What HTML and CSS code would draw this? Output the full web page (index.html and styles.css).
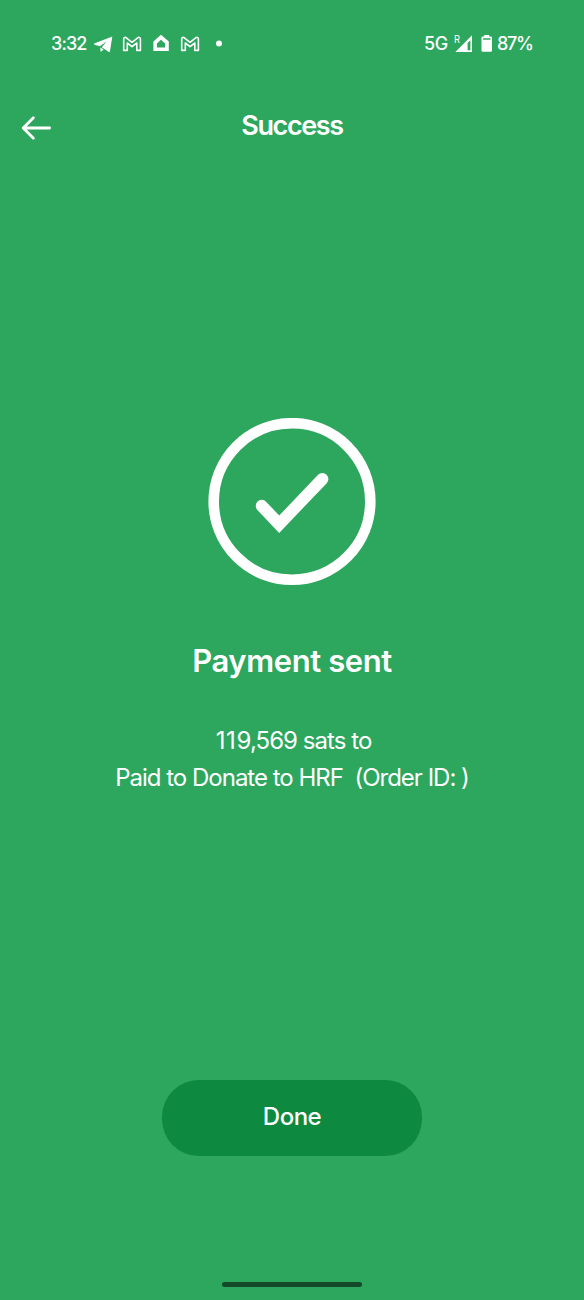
FILE: index.html
```html
<!DOCTYPE html>
<html lang="en">
<head>
<meta charset="utf-8">
<title>Success</title>
<link rel="stylesheet" href="styles.css">
</head>
<body>
<div class="screen">
  <div class="status">
    <span class="time">3:32</span>
    <svg class="notifications" width="136" height="24" viewBox="90 32 136 24" fill="none">
      <path d="M94.2 43.6 112.3 36.4 110 51.2Q109.7 52.4 108.5 51.7L101.8 47.2 106.6 41.6 99.8 46.2 94.5 44.8Q93.4 44.2 94.2 43.6ZM100.4 47.4 103.6 49.6 101.4 51.6Q100.4 51.8 100.4 50.6Z" fill="#fff"/>
      <g id="mail" stroke="#fff" stroke-width="1.6" stroke-linejoin="round">
        <path d="M123.7 50.4V39.2Q123.8 36.8 126 37.6L132 42.3 138 37.6Q140.3 36.8 140.4 39.2V50.4H136.8V43L132 46.7 127.3 43V50.4Z"/>
      </g>
      <path d="M161 34.8 168.8 41.5V51H153.4V41.5ZM161 39.8 156.9 43.4V47.4H165.1V43.4Z" fill="#fff" fill-rule="evenodd"/>
      <use href="#mail" x="58"/>
      <circle cx="219" cy="43.5" r="3" fill="#fff"/>
    </svg>
    <span class="network">5G</span>
    <svg class="signal" width="20" height="24" viewBox="453 32 20 24">
      <text class="roaming" x="454" y="43" textLength="6" lengthAdjust="spacingAndGlyphs">R</text>
      <path d="M472 35.3V52H455.3ZM470.4 40.2 467.6 43V50.3H470.4Z" fill="#fff" fill-rule="evenodd"/>
    </svg>
    <svg class="battery" width="12" height="24" viewBox="481 32 12 24">
      <path fill="#fff" fill-rule="evenodd" d="M484.2 35H489.2V36.6H490.8Q492 36.6 492 37.8V50.6Q492 51.8 490.8 51.8H482.7Q481.5 51.8 481.5 50.6V37.8Q481.5 36.6 482.7 36.6H484.2ZM483.1 38.2V39.8H490.4V38.2Z"/>
    </svg>
    <span class="percent">87%</span>
  </div>
  <header class="header">
    <svg class="back" width="32" height="28" viewBox="20 114 32 28" fill="none" stroke="#fff" stroke-width="2.8" stroke-linecap="round" stroke-linejoin="round">
      <path d="M49.6 128H23.2M33.4 117.8 23.2 128 33.4 138.2"/>
    </svg>
    <h1 class="title">Success</h1>
  </header>
  <main class="result">
    <svg width="168" height="168" viewBox="208 418 168 168" fill="none" stroke="#fff">
      <circle cx="292" cy="501.5" r="78.3" stroke-width="10.6"/>
      <path d="M261.7 505.8 279.2 524.2 322.4 479" stroke-width="12" stroke-linecap="round"/>
    </svg>
    <h2 class="heading">Payment sent</h2>
    <p class="details"><span class="amount"><span class="ones">11</span>9,569 sats to</span><br><span class="memo">Paid to Donate to HRF&nbsp; (Order ID: )</span></p>
  </main>
  <button class="done">Done</button>
  <div class="home"></div>
</div>
</body>
</html>
```
FILE: styles.css
```css
* { box-sizing: border-box; }
body { margin: 0; }
.screen {
  width: 584px;
  height: 1300px;
  background: #2ca75d;
  color: #fff;
  font-family: Inter, "Liberation Sans", sans-serif;
  display: flex;
  flex-direction: column;
  align-items: center;
}
.status {
  width: 100%;
  height: 88px;
  padding: 0 51px;
  display: flex;
  align-items: center;
  font-size: 18px;
  font-weight: 500;
  line-height: 24px;
}
.time { width: 39px; letter-spacing: -0.9px; }
.network { margin-left: auto; width: 29px; letter-spacing: -0.3px; }
.roaming { font-size: 11px; font-weight: 400; fill: #fff; }
.battery { margin: 0 4px 0 8px; }
.percent { width: 36px; white-space: nowrap; letter-spacing: -1.3px; }
.header {
  width: 100%;
  height: 80px;
  padding: 0 20px;
  display: grid;
  grid-template-columns: 32px 1fr 32px;
  align-items: center;
}
.title {
  margin: 0;
  padding-bottom: 4px;
  text-align: center;
  font-size: 27px;
  line-height: 32px;
  font-weight: 600;
  letter-spacing: -1.4px;
}
.result {
  padding-top: 250px;
  height: 912px;
  width: 100%;
  display: flex;
  flex-direction: column;
  align-items: center;
}
.heading {
  margin: 55px 0 0;
  font-size: 31px;
  line-height: 40px;
  font-weight: 600;
  letter-spacing: -0.4px;
}
.details {
  margin: 41px 0 0;
  text-align: center;
  font-size: 24px;
  line-height: 37px;
}
.amount { letter-spacing: -0.95px; padding-left: 3px; }
.ones { letter-spacing: 0.7px; }
.memo { letter-spacing: -1px; }
.done {
  width: 260px;
  height: 76px;
  flex: none;
  border: 0;
  border-radius: 37px;
  padding: 0 0 3px;
  background: #0e8940;
  color: #fff;
  font: 500 24px/32px Inter, "Liberation Sans", sans-serif;
  letter-spacing: -0.5px;
}
.home {
  width: 140px;
  height: 5px;
  margin-top: 126px;
  border-radius: 3px;
  background: #124a2a;
}
```
